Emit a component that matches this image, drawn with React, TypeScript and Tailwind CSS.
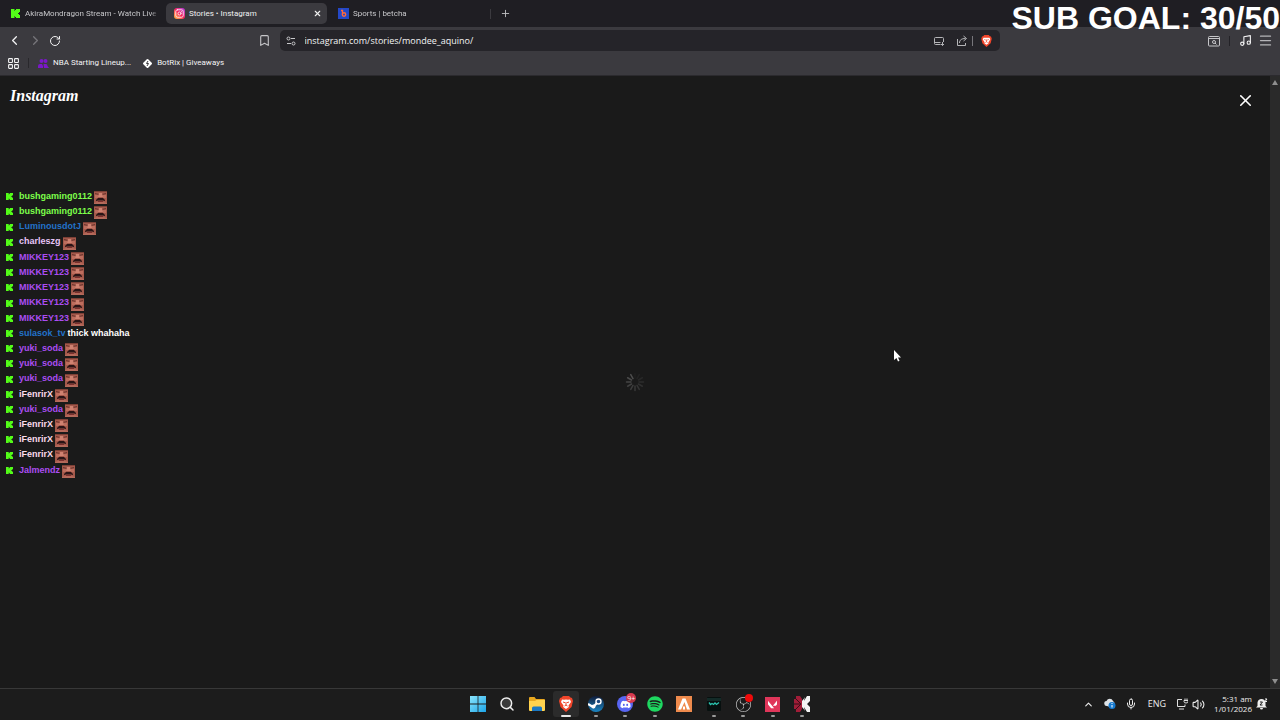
import type { ReactNode } from "react";
import { FaDiscord, FaSpotify } from "react-icons/fa";
import { SiObsstudio, SiValorant } from "react-icons/si";
import {
    Bookmark,
    ChevronLeft,
    ChevronRight,
    ChevronUp,
    Instagram,
    LayoutGrid,
    Menu,
    Mic,
    Music,
    Plus,
    RotateCw,
    Search,
    Volume2,
    X,
} from "lucide-react";

interface IMessage {
    user: string;
    color: string;
    text?: string;
}

const GREEN = "text-[#7dff4a]";
const BLUE = "text-[#2272c9]";
const PURPLE = "text-[#ab4df2]";
const PINK = "text-[#fbdcec]";
const LILAC = "text-[#e6c4f7]";

const messages: IMessage[] = [
    { user: "bushgaming0112", color: GREEN },
    { user: "bushgaming0112", color: GREEN },
    { user: "LuminousdotJ", color: BLUE },
    { user: "charleszg", color: LILAC },
    { user: "MIKKEY123", color: PURPLE },
    { user: "MIKKEY123", color: PURPLE },
    { user: "MIKKEY123", color: PURPLE },
    { user: "MIKKEY123", color: PURPLE },
    { user: "MIKKEY123", color: PURPLE },
    { user: "sulasok_tv", color: BLUE, text: "thick whahaha" },
    { user: "yuki_soda", color: PURPLE },
    { user: "yuki_soda", color: PURPLE },
    { user: "yuki_soda", color: PURPLE },
    { user: "iFenrirX", color: PINK },
    { user: "yuki_soda", color: PURPLE },
    { user: "iFenrirX", color: PINK },
    { user: "iFenrirX", color: PINK },
    { user: "iFenrirX", color: PINK },
    { user: "Jalmendz", color: PURPLE },
];

function KickIcon({ className }: { className: string }) {
    return (
        <svg viewBox="0 0 9 9" className={className} fill="#53fc18">
            <path d="M0 0h3.500v2H4V1h1V0h4v3H8v1H7v1h1v1h1v3H5V8H4V7h-.5v2H0z" />
        </svg>
    );
}

function Emote() {
    return (
        <svg viewBox="0 0 13 13" className="size-[13px]">
            <rect width="13" height="13" fill="#a4594b" />
            <path d="M0 0h13v1H0z" fill="#7d4036" />
            <path d="M1 2l4 1v1L1 3zM8 3l4-1v1L8 4z" fill="#6b342d" />
            <path d="M5 2h3l1 4H4z" fill="#d08271" />
            <path d="M1 4h3v3H1zM9 4h3v3H9z" fill="#bd6d5d" />
            <path d="M4 7h5l2 2v1L9 9.500H4L2 10V9z" fill="#2a1416" />
            <path d="M4 10h5v1H4z" fill="#7c2f2e" />
            <path d="M0 12l3-1h7l3 1v1H0z" fill="#b5695a" />
        </svg>
    );
}

function InstagramIcon() {
    return (
        <span className="flex size-[11px] shrink-0 items-center justify-center rounded-[3px] bg-linear-to-tr from-[#ffb52e] via-[#f5205f] to-[#b42be8] text-white">
            <Instagram size={9} strokeWidth={2} />
        </span>
    );
}

function BetchaIcon() {
    return (
        <svg viewBox="0 0 11 11" className="size-[11px] shrink-0">
            <rect width="11" height="11" fill="#2448c8" />
            <path d="M3 2.500h1.500V6" fill="none" stroke="#ff6a3c" strokeWidth="1.300" />
            <circle cx="6" cy="6.500" r="1.700" fill="none" stroke="#ff6a3c" strokeWidth="1.400" />
        </svg>
    );
}

function PeopleIcon() {
    return (
        <svg viewBox="0 0 11 11" className="size-[11px]" fill="#7a17c9">
            <circle cx="3.500" cy="3" r="2" />
            <circle cx="7.500" cy="3" r="2" />
            <path d="M0 10V8q0-2 2-2h2l1 2v2zM5.500 6H8q1.500 0 1.500 2l1.500 2H6z" />
        </svg>
    );
}

function BotrixIcon() {
    return (
        <svg viewBox="0 0 11 11" className="size-[11px]">
            <path
                d="M5.500 2L9 5.500 5.500 9 2 5.500z"
                fill="#fff"
                stroke="#fff"
                strokeWidth="2"
                strokeLinejoin="round"
            />
            <path d="M6 3L4.500 5.500h2L5 8" fill="none" stroke="#3b3a3f" />
        </svg>
    );
}

function TuneIcon() {
    return (
        <svg viewBox="0 0 10 10" className="size-[10px]" fill="none" stroke="#c9c9cc">
            <circle cx="2.500" cy="2.500" r="1.500" />
            <path d="M5 2.500h4M1 7.500h4" />
            <circle cx="7.500" cy="7.500" r="1.500" />
        </svg>
    );
}

function InstallIcon() {
    return (
        <svg viewBox="0 0 12 12" className="size-3" fill="none" stroke="#b5b5b8">
            <path d="M7.500 9.500h-5a1 1 0 0 1-1-1v-5a1 1 0 0 1 1-1h7a1 1 0 0 1 1 1V7M1.500 7.500h6M9.500 7v3.500M8 9l1.500 1.500L11 9" />
        </svg>
    );
}

function ShareIcon() {
    return (
        <svg viewBox="0 0 12 12" className="size-3" fill="none" stroke="#b5b5b8">
            <path d="M1.500 4v6.500h8V8M3.500 8c0-3 2-4.500 6-4.500M7.500 1l3 2.500-3 2.500" />
        </svg>
    );
}

function PageSearchIcon() {
    return (
        <svg viewBox="0 0 12 12" className="size-3" fill="none" stroke="#c6c6c9">
            <rect x=".5" y="1.500" width="11" height="9.500" rx="1" />
            <path d="M.5 3.500h11M7 8l1.500 1.500" />
            <circle cx="6" cy="7" r="1.500" />
        </svg>
    );
}

function BraveIcon({ className }: { className: string }) {
    return (
        <svg viewBox="0 0 14 16" className={className}>
            <path d="M4 0h6l1.500 1.500L13 2l1 3-1.500 6L7 16l-5.500-5L0 5l1-3 1.500-.5z" fill="#f0452a" />
            <path d="M3 3.500l2 .3L7 3.500l2 .3 2-.3 1 2.500-2.500 3.500.3 1.500L7 13l-2.800-2 .3-1.500L2 6z" fill="#fff" />
            <path d="M4 6l2 .7M10 6l-2 .7M7 6v3M5.500 10L7 9l1.500 1" fill="none" stroke="#f0452a" />
        </svg>
    );
}

function Spinner() {
    return (
        <svg viewBox="0 0 20 20" className="size-5" stroke="#777" strokeWidth="1.500" strokeLinecap="round">
            {Array.from({ length: 12 }, (_, i) => (
                <path
                    key={i}
                    d="M10 1.500v4.500"
                    transform={`rotate(${i * 30} 10 10)`}
                    opacity={0.05 + (i / 11) * 0.5}
                />
            ))}
        </svg>
    );
}

function WindowsIcon() {
    return (
        <svg viewBox="0 0 16 16" className="size-4">
            <defs>
                <linearGradient id="win" x1="0" y1="0" x2="1" y2="1">
                    <stop offset="0" stopColor="#8be5fd" />
                    <stop offset="1" stopColor="#1ca5e8" />
                </linearGradient>
            </defs>
            <path d="M0 0h7.600v7.600H0zM8.400 0H16v7.600H8.400zM0 8.400h7.600V16H0zM8.400 8.400H16V16H8.400z" fill="url(#win)" />
        </svg>
    );
}

function FolderIcon() {
    return (
        <svg viewBox="0 0 16 16" className="size-4">
            <path d="M0 2q0-1 1-1h4.500L7 3h8q1 0 1 1v10H0z" fill="#e9a820" />
            <path d="M0 5h6l1.500-1H16v10q0 1-1 1H1q-1 0-1-1z" fill="#ffd34f" />
            <path d="M3 15v-3q0-1.500 1.500-1.500h7q1.500 0 1.500 1.500v3z" fill="#1b79c4" />
        </svg>
    );
}

function SteamIcon() {
    return (
        <svg viewBox="0 0 16 16" className="size-4">
            <defs>
                <linearGradient id="steam" x1="0" y1="0" x2="0" y2="1">
                    <stop offset="0" stopColor="#101c3a" />
                    <stop offset="1" stopColor="#1a86c4" />
                </linearGradient>
            </defs>
            <circle cx="8" cy="8" r="8" fill="url(#steam)" />
            <path d="M0 8l5 3 3-3 2-3" fill="none" stroke="#fff" strokeWidth="2.200" />
            <circle cx="10.500" cy="5.500" r="2.500" fill="#1b4a80" stroke="#fff" strokeWidth="1.400" />
            <circle cx="5.500" cy="10.500" r="2" fill="#fff" />
        </svg>
    );
}

function FaceitIcon() {
    return (
        <svg viewBox="0 0 16 16" className="size-4">
            <rect width="16" height="16" fill="#ef8b4d" />
            <path d="M6.500 2.500h3L14 13.500h-3L8.500 6 5 13.500H2z" fill="#fff" />
            <path d="M7 10.500h2v3H7z" fill="#fff" />
        </svg>
    );
}

function TerminalIcon() {
    return (
        <svg viewBox="0 0 14 16" className="h-4 w-[14px]">
            <rect y="1" width="14" height="14" rx="1" fill="#07100f" />
            <path d="M0 2h14v3H0z" fill="#132b28" />
            <path
                d="M2 6.500l1.500 2 1.500-1 1.500 1L8 7l1.500 1.500L12 6.500"
                fill="none"
                stroke="#2bc4b0"
                strokeWidth="1.300"
            />
        </svg>
    );
}

function FlowerIcon() {
    return (
        <svg viewBox="0 0 16 16" className="size-4">
            <path d="M2 0h4l2 3v10l-2 3H2v-3H0V9l1-1-1-1V3h2z" fill="#a11d38" />
            <path d="M2 3l5 5-5 5M1 8h6" fill="none" stroke="#3a0d17" />
            <path d="M16 0v16h-4L8 11V5l4-5z" fill="#f4f4f4" />
            <path d="M11 0h2l-3 5zM16 5v6l-3-3zM11 16h2l-3-5z" fill="#1c1c1c" />
        </svg>
    );
}

function NetworkIcon() {
    return (
        <svg viewBox="0 0 12 12" className="size-3" fill="none" stroke="#e0e0e0">
            <path d="M6 1.500H1.500v7H9v-2M3 11h5M9 .5v2M11 .5v2M8 2.500h4v1q0 1.500-2 1.500t-2-1.500z" />
        </svg>
    );
}

function CloudIcon() {
    return (
        <svg viewBox="0 0 12 12" className="size-3">
            <path d="M3 8a2.500 2.500 0 0 1-.5-5A3.500 3.500 0 0 1 9 3q2 1 1.500 4L6 9z" fill="#dde2e6" />
            <circle cx="8" cy="7.500" r="3.500" fill="#1479cf" />
            <path d="M8 7v2.500M8 5v1" stroke="#fff" />
        </svg>
    );
}

function BellIcon() {
    return (
        <svg viewBox="0 0 12 12" className="size-3">
            <path d="M0 9.500L1.500 8V4.500Q2 1 5.500 1t4 3.500V8L11 9.500zM4 10h3q0 1.500-1.500 1.500T4 10z" fill="#eee" />
            <path d="M4 4h2.500L4 7h2.500" fill="none" stroke="#1c1c1c" />
            <path d="M9 1h2L9 3.500h2" fill="none" stroke="#eee" />
        </svg>
    );
}

function Tab({ icon, title, active }: { icon: ReactNode; title: string; active?: boolean }) {
    return (
        <div
            className={
                active
                    ? "flex h-[21px] w-[161px] items-center gap-1 rounded-[5px] bg-[#3b3a3f] pr-1 pl-2 text-[#f0f0f0]"
                    : "flex h-[21px] w-[160px] items-center gap-1 pr-1 pl-2 text-[#c6c6c9]"
            }
        >
            <span className="flex size-[11px] shrink-0 items-center justify-center">{icon}</span>
            <button className={active ? "flex-1 text-left" : "flex-1 mask-r-from-95% text-left whitespace-nowrap"}>
                {title}
            </button>
            {active ? (
                <button aria-label="Close tab" className="flex size-3 items-center justify-center">
                    <X size={9} strokeWidth={3} />
                </button>
            ) : null}
        </div>
    );
}

function BrowserHeader() {
    return (
        <header className="shrink-0 bg-[#3b3a3f] font-[Roboto,'Open_Sans',sans-serif] text-[8px] text-[#f4f4f5]">
            <div className="flex h-[27px] items-center bg-[#1f1e23] pl-[2px]">
                <Tab icon={<KickIcon className="size-[9px]" />} title="AkiraMondragon Stream - Watch Live" />
                <div className="ml-1">
                    <Tab icon={<InstagramIcon />} title="Stories • Instagram" active />
                </div>
                <div className="ml-[3px] flex items-center">
                    <Tab icon={<BetchaIcon />} title="Sports | betcha" />
                    <span className="h-2.5 w-px bg-[#3b3a3f]" />
                </div>
                <button aria-label="New tab" className="ml-2 flex size-3 items-center justify-center text-[#bdbdc0]">
                    <Plus size={11} strokeWidth={2} />
                </button>
            </div>
            <div className="flex h-[27px] items-center px-[7px]">
                <div className="flex items-center gap-[6px]">
                    <button aria-label="Back">
                        <ChevronLeft size={15} strokeWidth={2} />
                    </button>
                    <button aria-label="Forward" className="text-[#77767b]">
                        <ChevronRight size={15} strokeWidth={2} />
                    </button>
                    <button aria-label="Reload">
                        <RotateCw size={12} strokeWidth={2} />
                    </button>
                </div>
                <div className="flex flex-1 justify-center pr-3">
                    <div className="flex w-[742px] items-center gap-[9px]">
                        <button aria-label="Bookmark this page" className="text-[#c6c6c9]">
                            <Bookmark size={13} strokeWidth={2} />
                        </button>
                        <div className="flex h-[21px] flex-1 items-center rounded-[5px] bg-[#252429] pr-2 pl-1.5">
                            <TuneIcon />
                            <input
                                aria-label="Address"
                                className="ml-[9px] min-w-0 flex-1 bg-transparent font-['Open_Sans','Noto_Sans',sans-serif] text-[9px] outline-none"
                                defaultValue="instagram.com/stories/mondee_aquino/"
                            />
                            <button aria-label="Install">
                                <InstallIcon />
                            </button>
                            <button aria-label="Share" className="ml-[11px]">
                                <ShareIcon />
                            </button>
                            <span className="mx-1 h-2.5 w-px bg-[#77767b]" />
                            <button aria-label="Shields" className="ml-1">
                                <BraveIcon className="h-3 w-[11px]" />
                            </button>
                        </div>
                    </div>
                </div>
                <div className="flex items-center">
                    <button aria-label="Search page">
                        <PageSearchIcon />
                    </button>
                    <span className="mx-[9px] h-2.5 w-px bg-[#232227]" />
                    <button aria-label="Media">
                        <Music size={13} strokeWidth={2} />
                    </button>
                    <button aria-label="Menu" className="ml-[6px] text-[#b5b5b8]">
                        <Menu size={15} strokeWidth={2} />
                    </button>
                </div>
            </div>
            <nav className="flex h-[22px] items-start border-b border-[#2b2a2e] pl-[7px]">
                <button aria-label="All bookmarks" className="mt-[3px]">
                    <LayoutGrid size={13} strokeWidth={2} />
                </button>
                <span className="mt-1 ml-2 h-2.5 w-px bg-[#29282c]" />
                <a href="#" className="ml-[9px] flex h-[18px] items-center gap-1">
                    <PeopleIcon />
                    NBA Starting Lineup...
                </a>
                <a href="#" className="ml-[11px] flex h-[18px] items-center gap-1">
                    <BotrixIcon />
                    BotRix | Giveaways
                </a>
            </nav>
        </header>
    );
}

function Chat() {
    return (
        <ul className="mt-[82px] ml-[6px] grid h-[289px] auto-rows-fr font-['Liberation_Sans',Arial,sans-serif] text-[9px] font-bold">
            {messages.map((m, i) => (
                <li key={i} className="flex items-center">
                    <KickIcon className="size-[7px]" />
                    <span className={`ml-[6px] ${m.color}`}>{m.user}</span>
                    {m.text ? (
                        <span className="ml-[2px] text-white">{m.text}</span>
                    ) : (
                        <span className="mt-[2px] ml-[2px]">
                            <Emote />
                        </span>
                    )}
                </li>
            ))}
        </ul>
    );
}

function StoryPage() {
    return (
        <div className="flex min-h-0 flex-1">
            <main className="relative flex-1">
                <div className="flex h-[31px] items-start justify-between pt-2 pr-[15px] pl-[10px]">
                    <a href="#" className="font-['Liberation_Serif',serif] text-base font-bold text-white italic">
                        Instagram
                    </a>
                    <button aria-label="Close" className="mt-[7px] text-white">
                        <X size={19} strokeWidth={2} />
                    </button>
                </div>
                <Chat />
                <div className="pointer-events-none absolute inset-0 flex items-center justify-center">
                    <Spinner />
                </div>
            </main>
            <div className="flex w-[10px] flex-col items-center justify-between bg-[#2a2a2a] py-1">
                <span className="h-0 w-0 border-x-3 border-b-5 border-x-transparent border-b-[#8f8f8f]" />
                <span className="h-0 w-0 border-x-3 border-t-5 border-x-transparent border-t-[#8f8f8f]" />
            </div>
        </div>
    );
}

function TaskbarApp({ label, state, children }: { label: string; state?: "open" | "active"; children: ReactNode }) {
    return (
        <button
            aria-label={label}
            className={`relative flex h-[26px] w-[26px] items-center justify-center rounded-[3px] ${
                state === "active" ? "bg-[#2b2b2b]" : ""
            }`}
        >
            {children}
            {state === "active" ? (
                <span className="absolute bottom-0 h-[2px] w-[10px] rounded-full bg-[#e8e8e8]" />
            ) : null}
            {state === "open" ? <span className="absolute bottom-0 h-[2px] w-1 rounded-full bg-[#9a9a9a]" /> : null}
        </button>
    );
}

function Taskbar() {
    return (
        <footer className="grid h-8 shrink-0 grid-cols-[1fr_auto_1fr] items-center border-t border-[#383838] bg-[#1c1c1c] pb-px text-[#ededed]">
            <span />
            <div className="flex w-[350px] items-center justify-between">
                <TaskbarApp label="Start">
                    <WindowsIcon />
                </TaskbarApp>
                <TaskbarApp label="Search">
                    <Search size={16} strokeWidth={2.2} fill="#3a3a3a" />
                </TaskbarApp>
                <TaskbarApp label="File Explorer">
                    <FolderIcon />
                </TaskbarApp>
                <TaskbarApp label="Brave" state="active">
                    <BraveIcon className="h-4 w-[14px]" />
                </TaskbarApp>
                <TaskbarApp label="Steam" state="open">
                    <SteamIcon />
                </TaskbarApp>
                <TaskbarApp label="Discord" state="open">
                    <span className="flex size-4 items-center justify-center rounded-full bg-[#5865f2]">
                        <FaDiscord size={11} color="#fff" />
                    </span>
                    <span className="absolute top-[2px] right-[2px] flex size-[10px] items-center justify-center rounded-full bg-[#d83a4f] text-[7px] leading-none text-white">
                        9+
                    </span>
                </TaskbarApp>
                <TaskbarApp label="Spotify" state="open">
                    <FaSpotify size={16} color="#1ed760" />
                </TaskbarApp>
                <TaskbarApp label="Faceit">
                    <FaceitIcon />
                </TaskbarApp>
                <TaskbarApp label="Terminal" state="open">
                    <TerminalIcon />
                </TaskbarApp>
                <TaskbarApp label="OBS Studio" state="open">
                    <SiObsstudio size={15} color="#c4c4c4" />
                    <span className="absolute top-[3px] right-[3px] size-2 rounded-full bg-[#f00a0a]" />
                </TaskbarApp>
                <TaskbarApp label="Valorant" state="open">
                    <span className="flex size-[15px] items-center justify-center bg-[#e0365a]">
                        <SiValorant size={9} color="#fff" />
                    </span>
                </TaskbarApp>
                <TaskbarApp label="Game" state="open">
                    <FlowerIcon />
                </TaskbarApp>
            </div>
            <div className="flex items-center justify-end pr-3 text-[9px]">
                <button aria-label="Show hidden icons">
                    <ChevronUp size={11} strokeWidth={2.5} />
                </button>
                <span className="ml-[10px]">
                    <CloudIcon />
                </span>
                <Mic size={12} strokeWidth={2} className="ml-[9px]" />
                <span className="ml-[11px]">ENG</span>
                <span className="ml-[10px]">
                    <NetworkIcon />
                </span>
                <Volume2 size={13} strokeWidth={2} className="ml-1" />
                <div className="ml-[9px] text-right text-[8px] leading-[10px]">
                    <div>5:31 am</div>
                    <div>1/01/2026</div>
                </div>
                <span className="ml-1">
                    <BellIcon />
                </span>
            </div>
        </footer>
    );
}

export default function App() {
    return (
        <div className="relative flex h-screen flex-col overflow-hidden bg-[#1a1a1a] font-['Open_Sans','Noto_Sans',sans-serif]">
            <BrowserHeader />
            <StoryPage />
            <Taskbar />
            <div className="absolute top-0 right-0 font-['Liberation_Sans',Arial,sans-serif] text-[32px] leading-9 font-bold whitespace-nowrap text-white">
                SUB GOAL: 30/50
            </div>
            <svg viewBox="0 0 8 12" className="absolute top-[350px] left-[893px] h-3 w-2">
                <path d="M1 0v10l2.500-2 1.500 3.500 1.500-.7L5 7.500h3z" fill="#fff" />
            </svg>
        </div>
    );
}
